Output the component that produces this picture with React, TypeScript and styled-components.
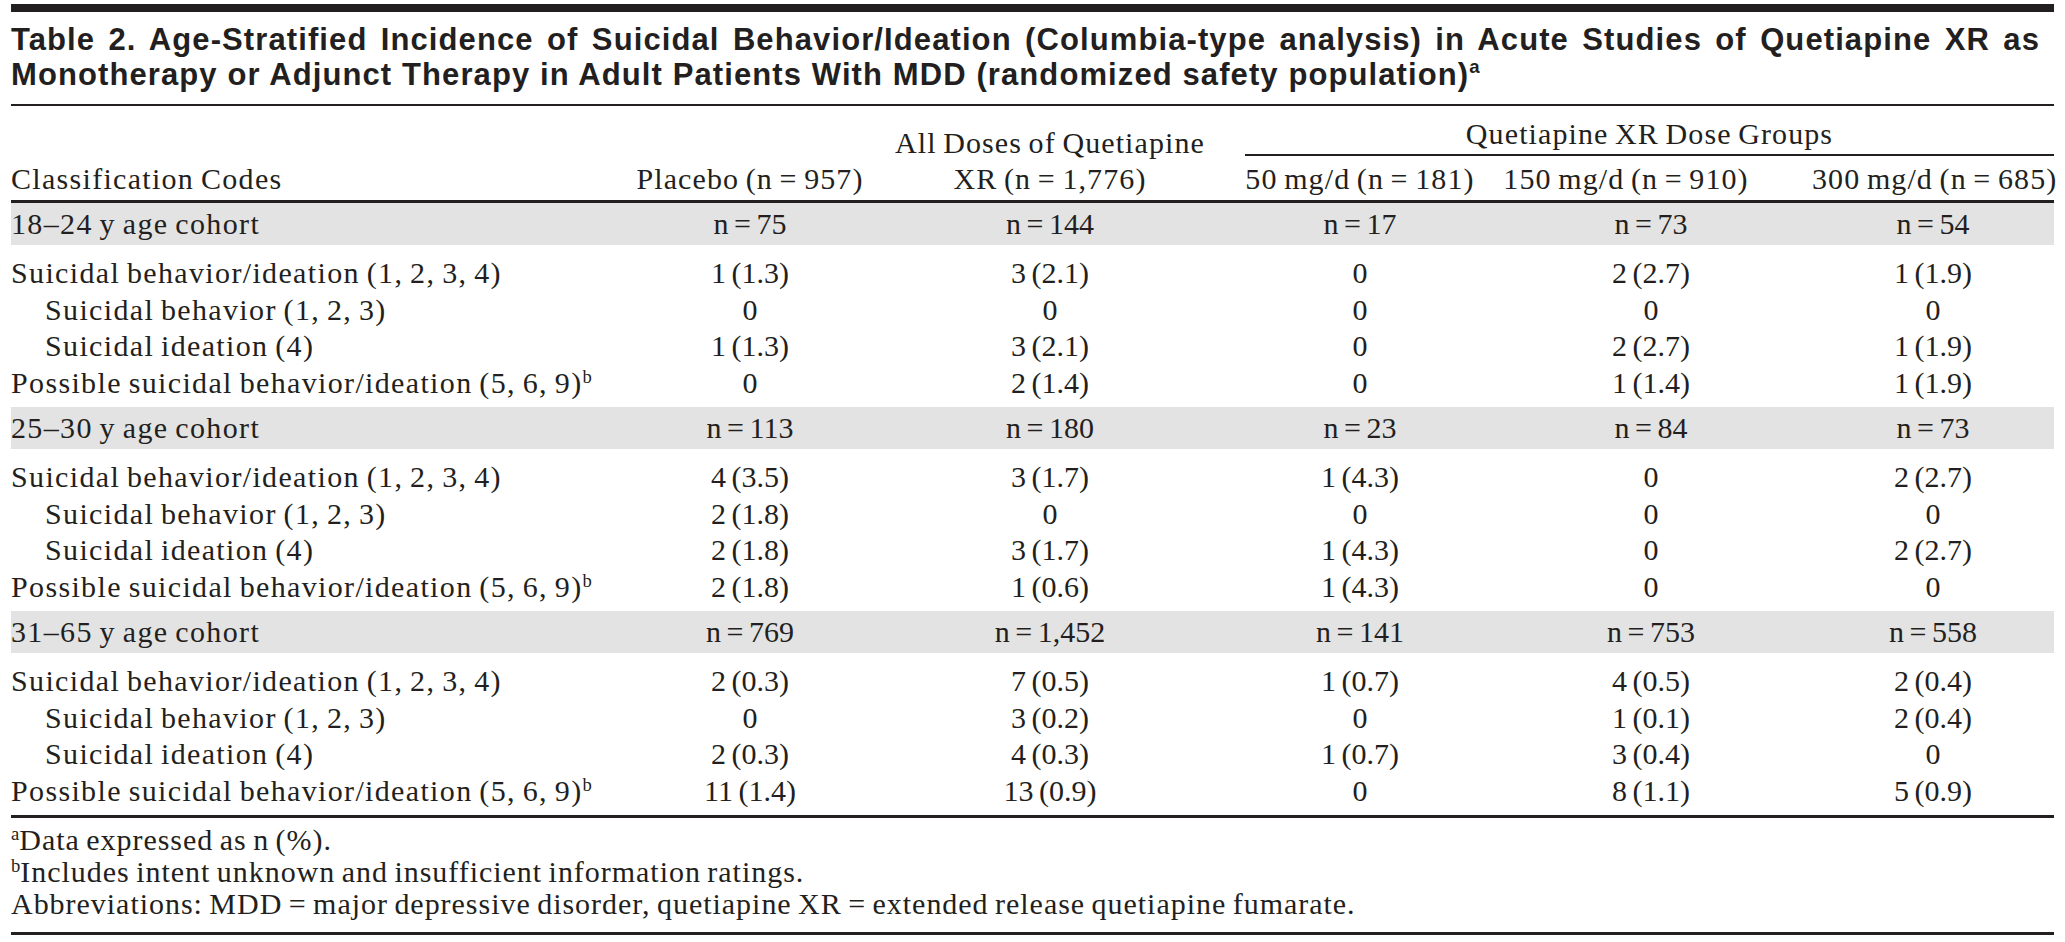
import React from 'react';
import styled, { createGlobalStyle } from 'styled-components';

const GlobalStyle = createGlobalStyle`
  html, body {
    margin: 0;
    padding: 0;
    background: #ffffff;
  }
  body {
    color: #231f20;
    font-family: "Liberation Serif", "Times New Roman", serif;
  }
`;

const Page = styled.div`
  width: 2043px;
  padding: 4px 11px 0;
`;

const TopBar = styled.div`
  height: 8px;
  background: #231f20;
`;

const Title = styled.h1`
  margin: 0;
  padding: 10px 14px 12px 0;
  font-family: "Liberation Sans", Arial, sans-serif;
  font-weight: 700;
  font-size: 31px;
  line-height: 35px;
  letter-spacing: 1.1px;
  border-bottom: 2px solid #231f20;
`;

// the first title line is set justified, like the typeset original
const TitleLine = styled.span<{ $justify?: boolean }>`
  display: block;
  height: 35px;
  white-space: ${p => (p.$justify ? 'normal' : 'nowrap')};
  text-align: ${p => (p.$justify ? 'justify' : 'left')};
  text-align-last: ${p => (p.$justify ? 'justify' : 'left')};
`;

const TitleSup = styled.sup`
  font-size: 0.6em;
  line-height: 0;
  vertical-align: 0.65em;
`;

const Table = styled.table`
  width: 2043px;
  table-layout: fixed;
  border-collapse: separate;
  border-spacing: 0;
  font-size: 30px;
  letter-spacing: 1.1px;
  word-spacing: -2px;
`;

const HeadRow = styled.tr<{ $h: number }>`
  height: ${p => p.$h}px;
`;

const HeadCell = styled.th<{ $align?: 'left' | 'center'; $shift?: number }>`
  padding: 0 ${p => p.$shift ?? 0}px 3px 0;
  font-weight: normal;
  line-height: 36px;
  text-align: ${p => p.$align ?? 'center'};
  letter-spacing: ${p => (p.$align === 'left' ? '1.3px' : '1.1px')};
  vertical-align: bottom;
  border-bottom: 3px solid #231f20;
  white-space: nowrap;
`;

const GroupCell = styled.th`
  padding: 0;
  font-weight: normal;
  vertical-align: bottom;
`;

const GroupLabel = styled.div`
  margin-left: 15px;
  padding-bottom: 2px;
  line-height: 36px;
  text-align: center;
  border-bottom: 2px solid #231f20;
`;

const BandRow = styled.tr`
  height: 42px;
  background: #e3e3e3;
`;

const BandCell = styled.td<{ $label?: boolean }>`
  padding: 0;
  line-height: 36px;
  vertical-align: middle;
  text-align: ${p => (p.$label ? 'left' : 'center')};
  letter-spacing: ${p => (p.$label ? '1.35px' : '0')};
  white-space: nowrap;
`;

const DataCell = styled.td<{ $label?: boolean; $indent?: boolean; $pos?: 'first' | 'last' | 'mid' }>`
  padding: ${p => (p.$pos === 'first' ? '10px' : '0')} 0 ${p => (p.$pos === 'last' ? '6px' : '0')}
    ${p => (p.$indent ? '34px' : '0')};
  line-height: 36.5px;
  vertical-align: middle;
  text-align: ${p => (p.$label ? 'left' : 'center')};
  letter-spacing: ${p => (p.$label ? '1.35px' : '0')};
  white-space: nowrap;
`;

const Sup = styled.sup`
  font-size: 0.62em;
  line-height: 0;
  vertical-align: 0.55em;
  letter-spacing: 0;
`;

const Notes = styled.div`
  padding: 6px 0 12px;
  font-size: 30px;
  line-height: 32px;
  letter-spacing: 0.97px;
  word-spacing: -2px;
  border-top: 3px solid #231f20;
  border-bottom: 3px solid #231f20;
`;

const NoteLine = styled.div`
  white-space: nowrap;
`;

type Row = {
  label: string;
  indent?: boolean;
  note?: string;
  values: string[];
};

type Cohort = {
  label: string;
  counts: string[];
  rows: Row[];
};

const rowLabels = (vals: string[][]): Row[] => [
  { label: 'Suicidal behavior/ideation (1, 2, 3, 4)', values: vals[0] },
  { label: 'Suicidal behavior (1, 2, 3)', indent: true, values: vals[1] },
  { label: 'Suicidal ideation (4)', indent: true, values: vals[2] },
  { label: 'Possible suicidal behavior/ideation (5, 6, 9)', note: 'b', values: vals[3] },
];

const cohorts: Cohort[] = [
  {
    label: '18–24 y age cohort',
    counts: ['n = 75', 'n = 144', 'n = 17', 'n = 73', 'n = 54'],
    rows: rowLabels([
      ['1 (1.3)', '3 (2.1)', '0', '2 (2.7)', '1 (1.9)'],
      ['0', '0', '0', '0', '0'],
      ['1 (1.3)', '3 (2.1)', '0', '2 (2.7)', '1 (1.9)'],
      ['0', '2 (1.4)', '0', '1 (1.4)', '1 (1.9)'],
    ]),
  },
  {
    label: '25–30 y age cohort',
    counts: ['n = 113', 'n = 180', 'n = 23', 'n = 84', 'n = 73'],
    rows: rowLabels([
      ['4 (3.5)', '3 (1.7)', '1 (4.3)', '0', '2 (2.7)'],
      ['2 (1.8)', '0', '0', '0', '0'],
      ['2 (1.8)', '3 (1.7)', '1 (4.3)', '0', '2 (2.7)'],
      ['2 (1.8)', '1 (0.6)', '1 (4.3)', '0', '0'],
    ]),
  },
  {
    label: '31–65 y age cohort',
    counts: ['n = 769', 'n = 1,452', 'n = 141', 'n = 753', 'n = 558'],
    rows: rowLabels([
      ['2 (0.3)', '7 (0.5)', '1 (0.7)', '4 (0.5)', '2 (0.4)'],
      ['0', '3 (0.2)', '0', '1 (0.1)', '2 (0.4)'],
      ['2 (0.3)', '4 (0.3)', '1 (0.7)', '3 (0.4)', '0'],
      ['11 (1.4)', '13 (0.9)', '0', '8 (1.1)', '5 (0.9)'],
    ]),
  },
];

const colWidths = [619, 240, 360, 260, 322, 242];

const App = () => {
  return (
    <Page>
      <GlobalStyle />
      <TopBar />
      <Title>
        <TitleLine $justify>
          Table 2. Age-Stratified Incidence of Suicidal Behavior/Ideation (Columbia-type analysis) in Acute Studies of
          Quetiapine XR as
        </TitleLine>
        <TitleLine>
          Monotherapy or Adjunct Therapy in Adult Patients With MDD (randomized safety population)
          <TitleSup>a</TitleSup>
        </TitleLine>
      </Title>
      <Table>
        <colgroup>
          {colWidths.map((w, i) => (
            <col key={i} style={{ width: w }} />
          ))}
        </colgroup>
        <thead>
          <HeadRow $h={50}>
            <HeadCell rowSpan={2} $align="left">Classification Codes</HeadCell>
            <HeadCell rowSpan={2}>Placebo (n = 957)</HeadCell>
            <HeadCell rowSpan={2}>
              All Doses of Quetiapine
              <br />
              XR (n = 1,776)
            </HeadCell>
            <GroupCell colSpan={3}>
              <GroupLabel>Quetiapine XR Dose Groups</GroupLabel>
            </GroupCell>
          </HeadRow>
          <HeadRow $h={47}>
            <HeadCell>50 mg/d (n = 181)</HeadCell>
            <HeadCell $shift={50}>150 mg/d (n = 910)</HeadCell>
            <HeadCell>300 mg/d (n = 685)</HeadCell>
          </HeadRow>
        </thead>
        {cohorts.map(c => (
          <tbody key={c.label}>
            <BandRow>
              <BandCell $label>{c.label}</BandCell>
              {c.counts.map((n, i) => (
                <BandCell key={i}>{n}</BandCell>
              ))}
            </BandRow>
            {c.rows.map((r, ri) => {
              const pos = ri === 0 ? 'first' : ri === c.rows.length - 1 ? 'last' : 'mid';
              return (
                <tr key={r.label}>
                  <DataCell $label $indent={r.indent} $pos={pos}>
                    {r.label}
                    {r.note && <Sup>{r.note}</Sup>}
                  </DataCell>
                  {r.values.map((v, i) => (
                    <DataCell key={i} $pos={pos}>
                      {v}
                    </DataCell>
                  ))}
                </tr>
              );
            })}
          </tbody>
        ))}
      </Table>
      <Notes>
        <NoteLine>
          <Sup>a</Sup>Data expressed as n (%).
        </NoteLine>
        <NoteLine>
          <Sup>b</Sup>Includes intent unknown and insufficient information ratings.
        </NoteLine>
        <NoteLine>
          Abbreviations: MDD = major depressive disorder, quetiapine XR = extended release quetiapine fumarate.
        </NoteLine>
      </Notes>
    </Page>
  );
};

export default App;
